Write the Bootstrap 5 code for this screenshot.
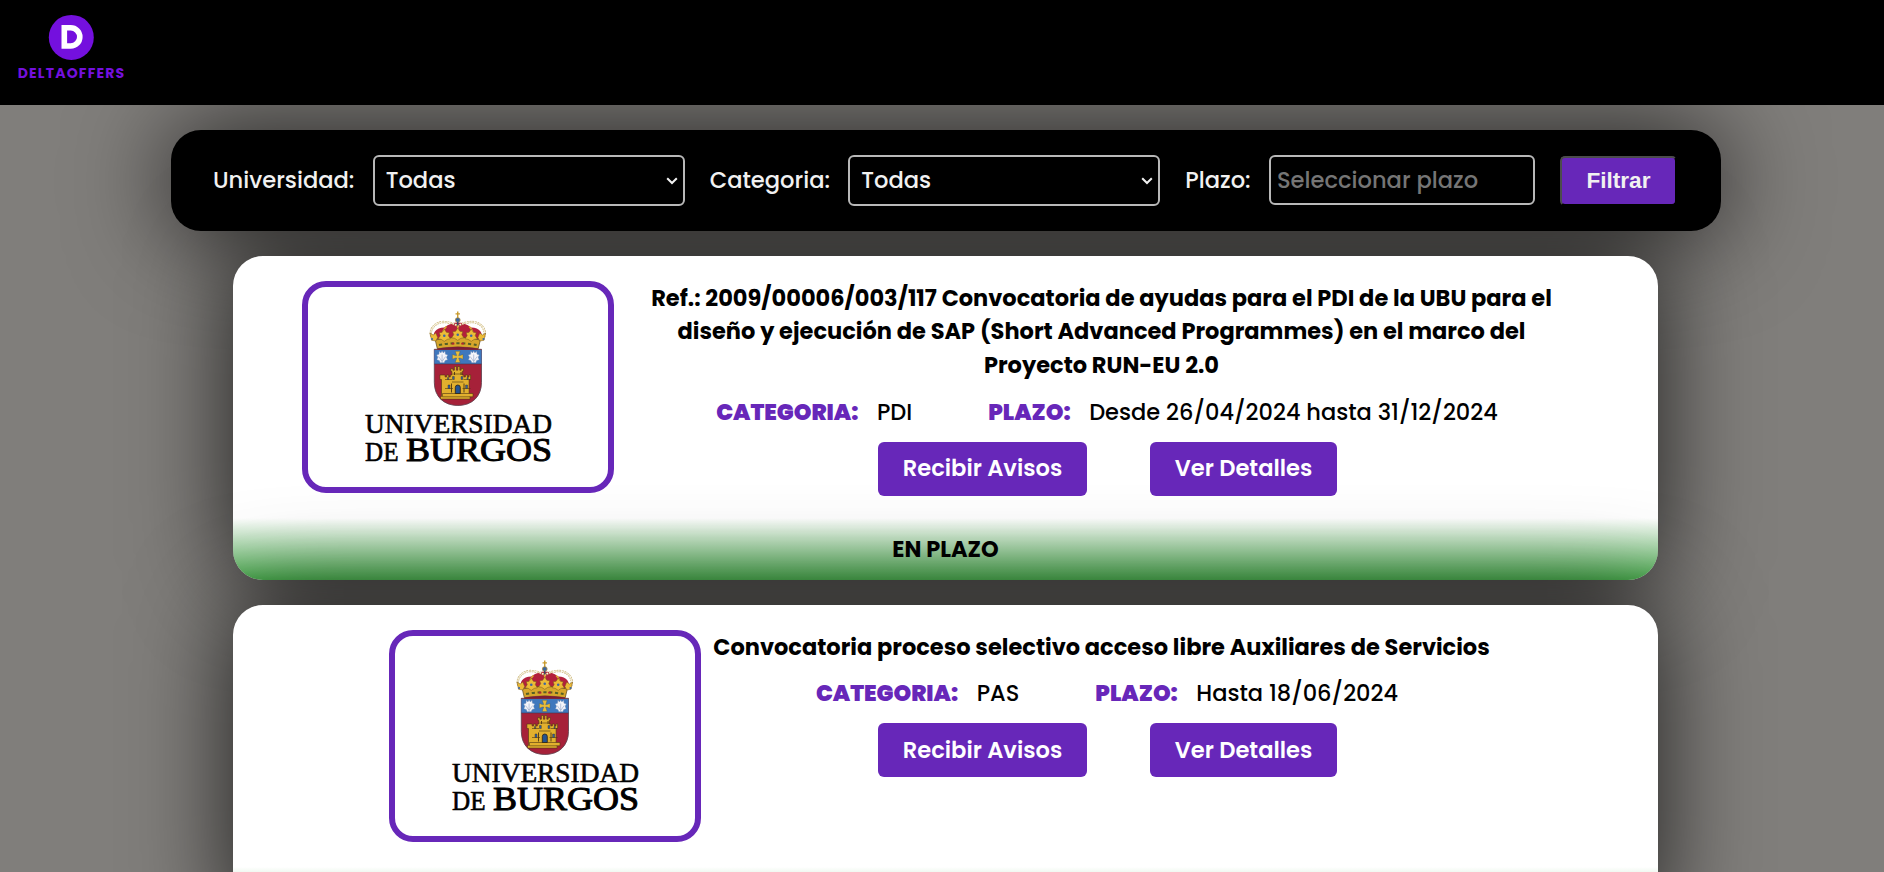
<!DOCTYPE html>
<html lang="es">
<head>
<meta charset="utf-8">
<meta name="viewport" content="width=device-width, initial-scale=1">
<title>DeltaOffers</title>
<link href="https://cdn.jsdelivr.net/npm/bootstrap@5.3.0/dist/css/bootstrap.min.css" rel="stylesheet">
<style>
  html, body { height: 100%; overflow: hidden; }
  body { background: #807e7b; font-family: Poppins, Inter, sans-serif; font-size: 22.6px; font-weight: 500; color: #000; line-height: 34px; }
  .site-bar { height: 105px; background: #000; position: relative; z-index: 2; }
  .filter-bar, .offer { box-shadow: 0 0 100px rgba(0,0,0,.78); border-radius: 30px; }
  .filter-bar { width: 1550px; height: 101px; margin: 25px 0 0 171px; padding-left: 42px; background: #000; color: #f1f1f1; }
  .filter-bar label { margin-right: 18.3px; padding-bottom: 2px; }
  .field { background: #000; color: #f1f1f1; border: 2px solid #b8b8b8; border-radius: 6px; height: 51px; font-weight: 500; margin-right: 25px; padding: 0 6px; outline: 0; flex: none; }
  select.field { width: 312px; padding: 0 20px 2px 11px; appearance: none; background: #000 url("data:image/svg+xml,%3Csvg xmlns='http://www.w3.org/2000/svg' width='12' height='8'%3E%3Cpath d='M1.200 1.200l4.800 4.800 4.800-4.800' fill='none' stroke='%23f1f1f1' stroke-width='2'/%3E%3C/svg%3E") no-repeat right 5px top 20px; }
  input.field { width: 266px; height: 50px; margin-bottom: 1px; }
  .field::placeholder { color: #757575; opacity: 1; }
  .btn-filter { width: 117px; height: 50px; background: #6727b9; color: #f1f1f1; border: 2px solid #000; border-top-color: #4c4c4c; border-left-color: #4c4c4c; border-radius: 5px; font: bold 22.6px "Liberation Sans", sans-serif; padding: 0; }
  .offer { width: 1425px; margin: 25px 0 0 233px; background: #fff; overflow: hidden; font-size: 22.5px; line-height: 33.75px; }
  .offer-body { padding: 25px 0 0 11px; height: 262px; }
  .logo-box { width: 312px; height: 212px; border: 6px solid #6727b9; border-radius: 24px; flex: none; }
  .logo-box svg { display: block; margin: -6px; }
  .wordmark { font-family: "Liberation Serif", serif; stroke: #000; stroke-width: .6; }
  .offer-info.wide { width: 986px; }
  .offer-info { width: 812px; padding-top: .7px; }
  .offer-title { font-size: inherit; line-height: inherit; font-weight: 700; margin: 0 11px 13px 0; white-space: nowrap; }
  .tag-name { color: #6727b9; font-weight: 900; margin-right: 18.5px; }
  .tag-value + .tag-name { margin-left: 76px; }
  .offer-actions { gap: 63px; margin-top: 12px; }
  .btn-offer, .btn-offer:hover { background: #6727b9; color: #fff; font-weight: 600; font-size: 22.6px; border: 0; border-radius: 6px; height: 54px; width: 187px; padding: 1.5px 0 0 1px; }
  .btn-offer.notify { width: 209px; }
  .status { height: 62px; line-height: 62px; font-weight: 700; background: linear-gradient(to top, #4caf50, rgba(76,175,80,0)); }
</style>
</head>
<body>
<header class="site-bar">
  <svg width="140" height="105" viewBox="0 0 140 105" class="d-block">
    <circle cx="71.3" cy="37.4" r="22.5" fill="#7410de"/>
    <path d="M64.3 27.8h6.4a9.1 9.1 0 0 1 0 18.2h-6.4z" fill="none" stroke="#fff" stroke-width="5.600"/>
    <text x="17.700" y="77.600" textLength="106.500" font-family="Poppins, Inter, sans-serif" font-weight="700" font-size="14" fill="#7410de">DELTAOFFERS</text>
  </svg>
</header>

<svg width="0" height="0" class="position-absolute">
  <symbol id="crest" viewBox="0 0 312 212">
    <!-- shield -->
    <path d="M132.3 67.8h47.2V101c0 14-9.500 23-23.600 23s-23.600-9-23.600-23z" fill="#a62139" stroke="#59404c" stroke-width=".8"/>
    <path d="M132.300 68.500h47.200v14h-47.200z" fill="#3f78bd"/>
    <path d="M132.300 82.500h47.200" stroke="#44334b" stroke-width=".6"/>
    <!-- shells and cross -->
    <g fill="#f4f5fa" stroke="#8296b8" stroke-width=".4">
      <path id="shell" d="M137.300 69.800l1.600 1.700 1.200-2 1.200 2 1.700-1.700.4 2.900 2.300.7-1.200 2.300 1 2.600-2.400.6-1 2.300-1.900-.3-1.900.3-1-2.300-2.400-.6 1-2.600-1.200-2.300 2.300-.7z"/>
      <use href="#shell" x="31.600"/>
    </g>
    <g stroke="#5f76a8" stroke-width=".4"><path d="M140.100 80v-7M140.100 80l-3.500-5M140.100 80l3.500-5M171.700 80v-7M171.700 80l-3.500-5M171.700 80l3.500-5"/></g>
    <path d="M153.200 69.800h5l-1.500 4.300h1.300l3-1.200v4.800l-3-1.200h-1.300l1.500 4.500h-5l1.500-4.500h-1.300l-3 1.200v-4.800l3 1.200h1.300z" fill="#e9bd3b" stroke="#4b5a55" stroke-width=".4"/>
    <!-- castle -->
    <g fill="#e2b02e" stroke="#4d3612" stroke-width=".6">
      <path d="M141.500 90.500h2v2h1.600v-2h2v2h1.600v-2h1.600v-3.500h-1v-3h2v1.700h1.500V82h2v3.700h1.400V82h2v3.700h1.400V84h2v3h-1v3.500h1.600v2h1.600v-2h2v2h1.600v-2h1.600v4.500h-1.500V112h1v2.600h-29.600V112h1V95h-1.600v-4.500z" transform="translate(-.4 3)"/>
      <path d="M140.500 112h30.500v3.300h-30.500z"/>
      <path d="M143 98h7M161.500 98h7M150.500 92.500h10.500M150 100.500h11.500M143 107h8M160.500 107h8" fill="none"/>
    </g>
    <path d="M146 103.500h2v3.500h-2zM163.600 103.500h2v3.500h-2zM150.500 95h1.800v3h-1.800zM159 95h1.800v3H159zM145.500 96h1.200v2h-1.200zM165 96h1.200v2H165z" fill="#2f62a6" stroke="#3d2c12" stroke-width=".4"/>
    <path d="M153.300 112v-6a2.500 2.500 0 0 1 5 0v6z" fill="#245391" stroke="#30220e" stroke-width=".8"/>
    <path d="M152.500 93.500v-3M159 93.500v-3M149.500 102v9M162 102v9" stroke="#4d3612" stroke-width=".9"/>
    <!-- crown -->
    <g transform="translate(-9.300 0) scale(1.060 1)">
      <path d="M134 58c-3-6 1-12 9-12 4-3.500 9-5 12.700-5s8.700 1.500 12.700 5c8 0 12 6 9 12z" fill="#b3203c"/>
      <path d="M131 55c-3-7 4-15 12-14.500 5 .3 9 1.500 12.700 4 4-2.500 8-3.700 12.800-4 8-.5 15 7.500 12 14.500" fill="none" stroke="#c9b478" stroke-width="2.300" stroke-dasharray="1.700 .8"/>
      <path d="M131 55c-3-7 4-15 12-14.500 5 .3 9 1.500 12.700 4 4-2.500 8-3.700 12.800-4 8-.5 15 7.500 12 14.500" fill="none" stroke="#fbf6e3" stroke-width="1" stroke-dasharray="1.600 .9"/>
      <path d="M155.700 43V59M145 45q-5 5-3.500 13M166.500 45q5 5 3.500 13" stroke="#d9a62f" stroke-width="1.500" fill="none"/>
      <path d="M134.500 58.500q21-5.500 42.500 0l-2 8.800q-19-3.500-38.500 0z" fill="#d7a62c" stroke="#5c4517" stroke-width=".7"/>
      <g fill="#ecbb37" stroke="#75531b" stroke-width=".5">
        <path id="leaf" d="M155.700 46.500l2 3.300 2.800.4-1 3 2 3-3 .7-2.800 2-2.800-2-3-.7 2-3-1-3 2.800-.4z"/>
        <use href="#leaf" x="-12.700" y="1"/><use href="#leaf" x="12.700" y="1"/>
        <path d="M129.500 51.500l3 2 2.500-2 1.800 4.500-1.800 3.500-4-.7zM182 51.500l-3 2-2.500-2-1.800 4.500 1.800 3.500 4-.7z"/>
      </g>
      <g fill="#3a66a5"><circle cx="155.700" cy="53.300" r="1.200"/><circle cx="143" cy="54.300" r="1.200"/><circle cx="168.400" cy="54.300" r="1.200"/><circle cx="131.500" cy="57.500" r="1"/><circle cx="180" cy="57.500" r="1"/></g>
      <path d="M138 63.500q17.500-3.500 35.500 0" fill="none" stroke="#556027" stroke-width="2" stroke-dasharray="3 2.500"/>
      <path d="M150 62.200h2.500M159 62.200h2.500" stroke="#ae2330" stroke-width="1.800"/>
      <path d="M136.500 67q19.500-3.500 38.500 0v1.300h-38.500z" fill="#7c1c35"/>
      <path d="M155.700 30v6.500M153.600 32.300h4.200" stroke="#c99a2c" stroke-width="1.300"/>
      <circle cx="155.700" cy="38.500" r="2.300" fill="#3c659d" stroke="#b08c36" stroke-width=".7"/>
      <path d="M155.700 40.500v3.500" stroke="#31466b" stroke-width="1.300"/>
    </g>
  </symbol>
</svg>

<main>
  <form class="filter-bar d-flex align-items-center">
    <label for="uni">Universidad:</label>
    <select id="uni" class="field"><option>Todas</option></select>
    <label for="cat">Categoria:</label>
    <select id="cat" class="field"><option>Todas</option></select>
    <label for="plazo">Plazo:</label>
    <input id="plazo" class="field" placeholder="Seleccionar plazo">
    <button type="button" class="btn-filter">Filtrar</button>
  </form>

  <article class="offer">
    <div class="offer-body d-flex justify-content-center">
      <div class="logo-box">
        <svg width="312" height="212" class="wordmark">
          <use href="#crest" stroke="none" y=".5"/>
          <text x="63" y="152" font-size="27.500" textLength="187" lengthAdjust="spacingAndGlyphs">UNIVERSIDAD</text>
          <text x="63" y="180" font-size="27" textLength="33.500" lengthAdjust="spacingAndGlyphs">DE</text>
          <text x="104" y="180" font-size="34" textLength="146" lengthAdjust="spacingAndGlyphs" stroke-width="1">BURGOS</text>
        </svg>
      </div>
      <div class="offer-info wide text-center">
        <h2 class="offer-title">Ref.: 2009/00006/003/117 Convocatoria de ayudas para el PDI de la UBU para el<br>diseño y ejecución de SAP (Short Advanced Programmes) en el marco del<br>Proyecto RUN-EU 2.0</h2>
        <div class="d-flex justify-content-center">
          <span class="tag-name">CATEGORIA:</span><span class="tag-value">PDI</span>
          <span class="tag-name">PLAZO:</span><span class="tag-value">Desde 26/04/2024 hasta 31/12/2024</span>
        </div>
        <div class="offer-actions d-flex justify-content-center">
          <button class="btn btn-offer notify">Recibir Avisos</button>
          <button class="btn btn-offer">Ver Detalles</button>
        </div>
      </div>
    </div>
    <div class="status text-center">EN PLAZO</div>
  </article>

  <article class="offer">
    <div class="offer-body d-flex justify-content-center">
      <div class="logo-box">
        <svg width="312" height="212" class="wordmark">
          <use href="#crest" stroke="none" y=".5"/>
          <text x="63" y="152" font-size="27.500" textLength="187" lengthAdjust="spacingAndGlyphs">UNIVERSIDAD</text>
          <text x="63" y="180" font-size="27" textLength="33.500" lengthAdjust="spacingAndGlyphs">DE</text>
          <text x="104" y="180" font-size="34" textLength="146" lengthAdjust="spacingAndGlyphs" stroke-width="1">BURGOS</text>
        </svg>
      </div>
      <div class="offer-info text-center">
        <h2 class="offer-title">Convocatoria proceso selectivo acceso libre Auxiliares de Servicios</h2>
        <div class="d-flex justify-content-center">
          <span class="tag-name">CATEGORIA:</span><span class="tag-value">PAS</span>
          <span class="tag-name">PLAZO:</span><span class="tag-value">Hasta 18/06/2024</span>
        </div>
        <div class="offer-actions d-flex justify-content-center">
          <button class="btn btn-offer notify">Recibir Avisos</button>
          <button class="btn btn-offer">Ver Detalles</button>
        </div>
      </div>
    </div>
    <div class="status"></div>
  </article>
</main>
</body>
</html>
